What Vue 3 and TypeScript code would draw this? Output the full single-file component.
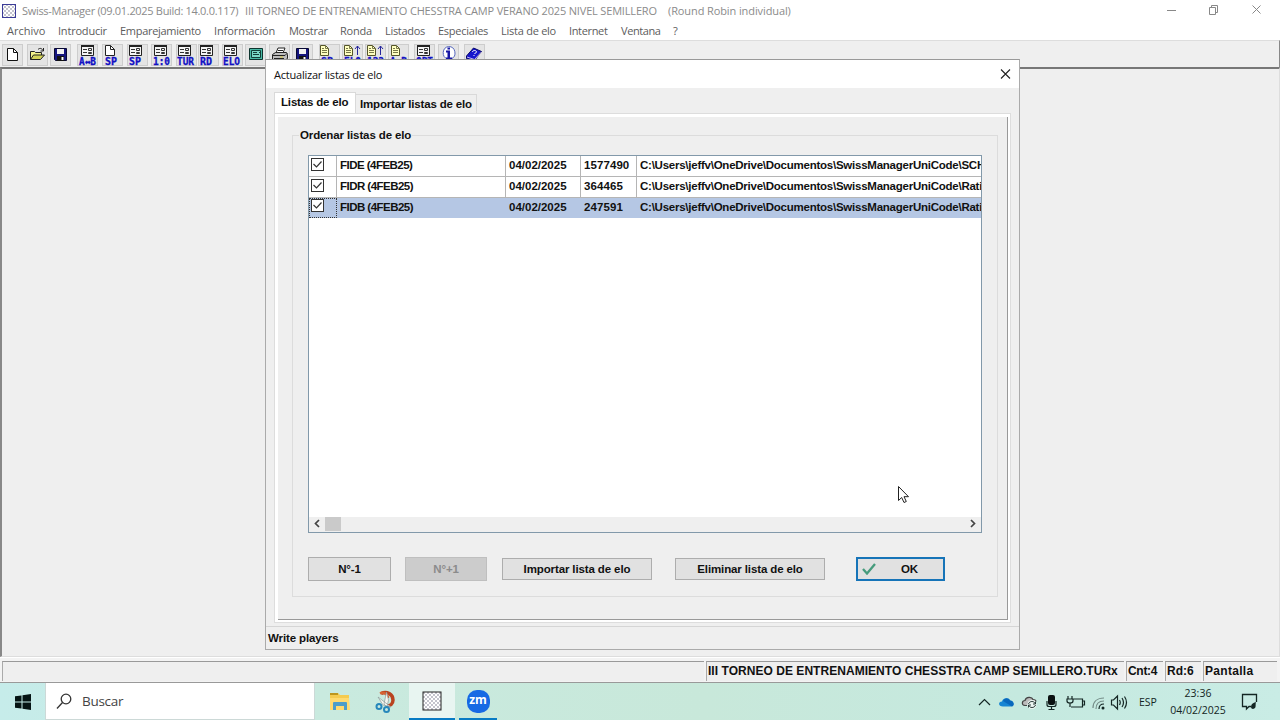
<template>
  <div class="desktop">
    <div class="titlebar">
      <svg class="app-icon" width="16" height="16" viewBox="0 0 16 16">
        <defs>
          <pattern id="checker" width="4" height="4" patternUnits="userSpaceOnUse">
            <rect width="4" height="4" fill="#fff" />
            <path d="M0 0L4 4M4 0L0 4" stroke="#9c9cab" stroke-width=".6" />
          </pattern>
        </defs>
        <rect x="1.500" y="1.500" width="13" height="13" fill="url(#checker)" stroke="#3c3c98" />
      </svg>
      <span class="app-name">Swiss-Manager (09.01.2025 Build: 14.0.0.117)</span>
      <span class="app-file">III TORNEO DE ENTRENAMIENTO CHESSTRA CAMP VERANO 2025 NIVEL SEMILLERO</span>
      <span class="app-mode">(Round Robin individual)</span>
      <svg class="window-buttons" width="100" height="20" viewBox="0 0 100 20" fill="none" stroke="#888">
        <path d="M1 9.500h9M43.500 6.500h6v7h-6zM45.500 6.500v-2h6v7h-2M86.500 4.500l8 8M94.500 4.500l-8 8" />
      </svg>
    </div>

    <nav class="menubar">
      <span
        v-for="item in menu"
        :key="item.label"
        class="menu-item"
        :style="{ width: item.width + 'px', letterSpacing: item.spacing + 'px' }"
      >{{ item.label }}</span>
    </nav>

    <div class="toolbar">
      <div
        v-for="(tool, i) in tools"
        :key="i"
        class="tool"
        :style="{ marginLeft: tool.gap + 'px' }"
      >
        <svg width="21" height="22" viewBox="0 0 21 22">
          <g v-if="tool.icon === 'new'">
            <path d="M5.500 4.500h6l4 4v8h-10z" fill="#fff" stroke="#111" />
            <path d="M11.500 4.500v4h4" fill="none" stroke="#111" />
          </g>
          <g v-else-if="tool.icon === 'open'" stroke="#222">
            <path d="M3.500 15.500v-8h4l1 1h6v3" fill="#f4f48c" />
            <path d="M3.500 15.500l3-4.500h11l-4 4.500z" fill="#d4d45a" />
            <path d="M11 5.500c2-2 4-1 5 1M16.500 4v3h-3" fill="none" />
          </g>
          <g v-else-if="tool.icon === 'save'">
            <path d="M4.500 4.500h12v12h-11l-1-1z" fill="#15157e" stroke="#090933" />
            <path d="M7 5h7v5H7z" fill="#f1f1f1" />
            <path d="M7 12h7v5H7z" fill="#111" />
            <path d="M11.500 13h2v3h-2z" fill="#fff" />
          </g>
          <g v-else-if="tool.icon === 'form'" :transform="`translate(${tool.shift ?? 0})`">
            <path d="M4.500 1.500h12v10h-12z" fill="#f4f4f4" stroke="#222" />
            <path d="M4 1h13v2H4z" fill="#222" />
            <path d="M6 5.500h4M6 8.500h4M11.500 4.500h3v2h-3zM11.500 8.500h3v1h-3z" fill="none" stroke="#333" />
          </g>
          <g v-else-if="tool.icon === 'page'" :transform="`translate(${tool.shift ?? 0})`">
            <path d="M5.500 1.500h5l4 4v6h-9z" fill="#fff" stroke="#222" />
            <path d="M10.500 1.500v4h4" fill="none" stroke="#222" />
          </g>
          <g v-else-if="tool.icon === 'list' || tool.icon === 'sort'" :transform="`translate(${tool.shift ?? 0})`">
            <path d="M2.500 1.500h5l3 3v7h-8z" fill="#ffffc0" stroke="#55552a" />
            <path d="M7.500 1.500v3h3M4 4.500h2M4 6.500h5M4 8.500h5" fill="none" stroke="#77774a" />
            <path v-if="tool.icon === 'sort'" d="M15.500 11V2M13 5l2.500-3L18 5" fill="none" stroke="#26269c" />
          </g>
          <g v-else-if="tool.icon === 'screen'">
            <path d="M4.500 4.500h13v11h-13z" fill="#48b9a5" stroke="#0d342e" />
            <path d="M6.500 6.500h9v7h-9z" fill="#79d9c7" stroke="#123e37" />
            <path d="M8 8.500h4M8 10.500h6M14 8.500h1" stroke="#123e37" />
          </g>
          <g v-else-if="tool.icon === 'print'" stroke="#222">
            <path d="M7 9l2-5h7l-2 5z" fill="#fff" />
            <path d="M3.500 10.500l3-2h11l1 2v4l-3 2h-12z" fill="#bcbcbc" />
            <path d="M4 11.500h12l2-2M5 14.500h10M9 6.500h5" fill="none" />
            <path d="M11 13h3" stroke="#d9c93c" />
          </g>
          <g v-else-if="tool.icon === 'info'">
            <path d="M10.500 2.500a6.500 6.500 0 0 1 2.500 12.500l-2.500 3-1-3A6.500 6.500 0 0 1 10.500 2.500z" fill="#fff" stroke="#5567bd" />
            <path d="M9 6.500h3v7h2V15H8v-1.500h1.500v-5H8v-2zM9.500 3.500h2.500v2H9.500z" fill="#1717a5" />
          </g>
          <g v-else>
            <path d="M2.500 12l7-8 8 3.500-7 9-8-2z" fill="#1616cd" stroke="#090967" />
            <path d="M3 13l7.500 2.500 7-7.500" fill="none" stroke="#edf" stroke-width=".8" />
            <path d="M8.500 8c0-2 4-2 4 0 0 1-2 1-2 2M9.500 11.500h1" fill="none" stroke="#fff" />
          </g>
          <text
            v-if="tool.text"
            class="tool-text"
            :x="tool.textX ?? 2"
            y="20.500"
            :textLength="tool.text.length > 2 ? 17 : 12"
            lengthAdjust="spacingAndGlyphs"
          >{{ tool.text }}</text>
        </svg>
      </div>
    </div>

    <div class="workspace"></div>

    <footer class="statusbar">
      <div class="panel panel-empty"></div>
      <div class="panel panel-file">III TORNEO DE ENTRENAMIENTO CHESSTRA CAMP SEMILLERO.TURx</div>
      <div class="panel panel-count">Cnt:4</div>
      <div class="panel panel-round">Rd:6</div>
      <div class="panel panel-screen">Pantalla</div>
    </footer>

    <div class="taskbar">
      <div class="start">
        <svg width="16" height="16" viewBox="0 0 16 16" fill="#061414">
          <path d="M0 2.300l6.500-.9v6.100H0zM7.500 1.200L16 0v7.500H7.500zM0 8.500h6.500v6.100L0 13.700zM7.500 8.500H16V16l-8.500-1.200z" />
        </svg>
      </div>
      <div class="search">
        <svg width="17" height="17" viewBox="0 0 17 17" fill="none" stroke="#333" stroke-width="1.300">
          <circle cx="10" cy="6" r="4.800" />
          <path d="M6.500 9.500L1 15.500" />
        </svg>
        <span>Buscar</span>
      </div>
      <div class="apps">
        <div class="app">
          <svg width="22" height="20" viewBox="0 0 22 20">
            <path d="M1 1h8l2 2h9v15H1z" fill="#f5cb4f" />
            <path d="M1 1h8v2H1z" fill="#bd961e" />
            <path d="M1 6h19l1 12H1z" fill="#ffda70" />
            <path d="M4 11q0-1 1-1h12q1 0 1 1v7h-3v-4H7v4H4z" fill="#4c9dc9" />
          </svg>
        </div>
        <div class="app">
          <svg width="22" height="24" viewBox="0 0 22 24" fill="none">
            <path d="M6 3.500c6-3 12 1 12 6.500 0 4-3 6-6 6" stroke="#b9431f" stroke-width="3.500" />
            <path d="M5 3.500c4-2 8 1 8 4.500" stroke="#d66231" stroke-width="2.500" />
            <path d="M11.500 2L9 14l3 3 1.500-7zM3 7l5 8 8 2z" fill="#f5f5ef" stroke="#8e9b9b" stroke-width=".7" />
            <circle cx="4" cy="16.500" r="2.500" stroke="#2687bb" stroke-width="2" />
            <circle cx="11.500" cy="19.500" r="2.500" stroke="#2687bb" stroke-width="2" />
          </svg>
        </div>
        <div class="app app-active">
          <svg width="20" height="20" viewBox="0 0 20 20">
            <rect x="1" y="1" width="18" height="18" fill="url(#checker)" stroke="#222" />
          </svg>
        </div>
        <div class="app app-running">
          <span class="zoom">zm</span>
        </div>
      </div>
      <div class="tray">
        <svg width="150" height="24" viewBox="0 0 150 24" fill="none" stroke="#142624" stroke-width="1.200">
          <path d="M1 15l5.500-5.500L12 15" />
          <path d="M25 16.500c-5 0-5-5-1-5 1-4 7-4 8-1 4 0 5 6 1 6z" fill="#1685d3" stroke="none" />
          <path d="M25 11c2-4 6-3 7-.5 4 0 5 5.500 2 6z" fill="#0868bd" stroke="none" />
          <path d="M49 15.500h-2c-4-.5-3-5 0-5 1-4 7-4 8-1 2 0 3 1 3 2" fill="#bbb" stroke="#444" />
          <circle cx="54" cy="14.500" r="4.500" fill="#edf6f3" stroke="none" />
          <path d="M50.500 14c1-3.500 6-3 6.500-.5m.5-2v2.500H55M57.500 15c-1 3.500-6 3-6.500.5m-.5 2V15H53" stroke-width=".9" />
          <rect x="70" y="5" width="7" height="10" rx="2" fill="#0a1111" stroke="none" />
          <path d="M69 11v3.500q0 2 2 2h5q2 0 2-2V11M73.500 17v3M70.500 19.500h6" />
          <path d="M94 9h10.500v8H93M105 11h1.500v4H105M90 6v3M94 6v3M89 9h6v2q0 2-3 2t-3-2zM92 13v4" />
          <g stroke="#768e89">
            <path d="M115 18C115 12 119 8 126 8M118 19c0-5 3-8 8-8" />
            <path d="M121 19c0-3 2-5 5-5" stroke="#142624" />
            <circle cx="125" cy="18" r="1.500" fill="#142624" stroke="none" />
          </g>
          <path d="M133.500 10h2l4-4v13l-4-4h-2zM141.500 10q1.500 2.500 0 5M144 8q3 4.500 0 9M146.500 6.500q4 6 0 12" />
        </svg>
        <span class="language">ESP</span>
        <div class="clock">
          <span>23:36</span>
          <span>04/02/2025</span>
        </div>
        <svg class="notice" width="18" height="18" viewBox="0 0 18 18" fill="none" stroke="#142624" stroke-width="1.300">
          <path d="M10 13.500H8L5.500 16v-2.500H1.500v-12h14V9" />
          <path d="M10 14c0-3 2-4 5-5-1 3 1 6-3 7-1 0-2-1-2-2z" fill="#142624" stroke="none" />
        </svg>
      </div>
    </div>

    <section class="dialog">
      <header class="dialog-title">
        <span>Actualizar listas de elo</span>
        <svg width="11" height="11" viewBox="0 0 11 11" fill="none" stroke="#222" stroke-width="1.100">
          <path d="M1 .500l9 9M10 .500l-9 9" />
        </svg>
      </header>

      <div class="dialog-body">
        <div class="tabs">
          <div class="tab tab-active">Listas de elo</div>
          <div class="tab">Importar listas de elo</div>
        </div>
        <div class="tab-page">
          <div class="tab-inner">
            <fieldset class="group">
              <legend>Ordenar listas de elo</legend>
              <div class="grid">
                <div
                  v-for="row in rows"
                  :key="row.name"
                  class="row"
                  :class="{ selected: row.selected }"
                >
                  <div class="cell cell-check">
                    <svg width="13" height="13" viewBox="0 0 13 13" fill="none" stroke="#333">
                      <rect x=".5" y=".5" width="12" height="12" fill="#fff" />
                      <path d="M2.500 6l3 3 5-5.500" stroke-width="1.200" />
                    </svg>
                  </div>
                  <div class="cell cell-name">{{ row.name }}</div>
                  <div class="cell cell-date">04/02/2025</div>
                  <div class="cell cell-count">{{ row.count }}</div>
                  <div class="cell cell-path">{{ row.path }}</div>
                </div>
                <div class="grid-space"></div>
                <div class="scrollbar">
                  <svg width="16" height="13" viewBox="0 0 16 13" fill="none" stroke="#444" stroke-width="1.700">
                    <path d="M10 3L6.500 6.500 10 10" />
                  </svg>
                  <div class="thumb"></div>
                  <svg class="scroll-right" width="16" height="13" viewBox="0 0 16 13" fill="none" stroke="#444" stroke-width="1.700">
                    <path d="M6 3l3.500 3.500L6 10" />
                  </svg>
                </div>
              </div>
              <div class="buttons">
                <button class="btn btn-up">N°-1</button>
                <button class="btn btn-down" disabled>N°+1</button>
                <button class="btn btn-import">Importar lista de elo</button>
                <button class="btn btn-delete">Eliminar lista de elo</button>
                <button class="btn btn-ok">
                  <svg width="14" height="12" viewBox="0 0 14 12" fill="none" stroke="#469b7c" stroke-width="2.300">
                    <path d="M1 6l4 4.500L13 1" />
                  </svg>
                  <span>OK</span>
                </button>
              </div>
            </fieldset>
          </div>
        </div>
      </div>
      <div class="dialog-status">Write players</div>
    </section>

    <svg class="cursor" width="13" height="20" viewBox="0 0 13 20">
      <path d="M2.500 1.500v14l3.200-3 2.300 5 2.300-1-2.300-4.800h4.500z" fill="#fff" stroke="#222" />
    </svg>
  </div>
</template>

<script setup lang="ts">
interface MenuItem {
  label: string
  width: number
  spacing: number
}

interface Tool {
  icon: string
  gap: number
  text?: string
  textX?: number
  shift?: number
}

interface RatingList {
  name: string
  count: number
  path: string
  selected?: boolean
}

const menu: MenuItem[] = [
  { label: 'Archivo', width: 51, spacing: 0 },
  { label: 'Introducir', width: 62, spacing: -0.2 },
  { label: 'Emparejamiento', width: 94, spacing: -0.3 },
  { label: 'Información', width: 75, spacing: -0.1 },
  { label: 'Mostrar', width: 51, spacing: -0.3 },
  { label: 'Ronda', width: 45, spacing: -0.2 },
  { label: 'Listados', width: 53, spacing: -0.3 },
  { label: 'Especiales', width: 63, spacing: -0.25 },
  { label: 'Lista de elo', width: 68, spacing: -0.25 },
  { label: 'Internet', width: 52, spacing: -0.35 },
  { label: 'Ventana', width: 52, spacing: -0.4 },
  { label: '?', width: 20, spacing: 0 }
]

const tools: Tool[] = [
  { icon: 'new', gap: 2 },
  { icon: 'open', gap: 4 },
  { icon: 'save', gap: 2 },
  { icon: 'form', gap: 6, text: 'A↔B' },
  { icon: 'page', gap: 4, text: 'SP', textX: 3, shift: -2 },
  { icon: 'form', gap: 4, text: 'SP', shift: -2 },
  { icon: 'form', gap: 3, text: '1:0', shift: -1 },
  { icon: 'form', gap: 4, text: 'TUR', textX: 1, shift: -2 },
  { icon: 'form', gap: 1, text: 'RD', shift: -2 },
  { icon: 'form', gap: 3, text: 'ELO', textX: 1, shift: -2 },
  { icon: 'screen', gap: 2 },
  { icon: 'print', gap: 3 },
  { icon: 'save', gap: 2 },
  { icon: 'list', gap: 6, text: 'SP', shift: -1 },
  { icon: 'sort', gap: 2, text: 'ELO' },
  { icon: 'sort', gap: 2, text: '123' },
  { icon: 'list', gap: 2, text: 'A↔B', shift: 1 },
  { icon: 'form', gap: 5, text: 'OPT', shift: -1 },
  { icon: 'info', gap: 3 },
  { icon: 'book', gap: 5 }
]

const folder = 'C:\\Users\\jeffv\\OneDrive\\Documentos\\SwissManagerUniCode\\'

const rows: RatingList[] = [
  { name: 'FIDE (4FEB25)', count: 1577490, path: folder + 'SCH' },
  { name: 'FIDR (4FEB25)', count: 364465, path: folder + 'Rati' },
  { name: 'FIDB (4FEB25)', count: 247591, path: folder + 'Rati', selected: true }
]
</script>

<style>
body {
  overflow: hidden;
}
</style>

<style scoped>
* {
  box-sizing: border-box;
}

.desktop {
  position: relative;
  display: flex;
  flex-direction: column;
  width: 1280px;
  height: 720px;
  background: #efefef;
  font-family: "Open Sans", "Noto Sans", sans-serif;
  font-size: 11px;
  white-space: nowrap;
}

.titlebar {
  display: flex;
  align-items: center;
  height: 21px;
  padding-left: 1px;
  background: #fff;
  color: #8b8b8b;
}

.app-icon {
  margin-right: 5px;
}

.app-name {
  width: 223px;
  letter-spacing: -0.31px;
}

.app-file {
  width: 423px;
  letter-spacing: -0.17px;
}

.app-mode {
  letter-spacing: -0.1px;
}

.window-buttons {
  margin-left: auto;
  margin-right: 14px;
}

.menubar {
  display: flex;
  align-items: center;
  height: 19px;
  padding-left: 7px;
  background: #fff;
  color: #5c5c5c;
}

.menu-item {
  flex: none;
}

.toolbar {
  display: flex;
  height: 27px;
  padding-top: 3px;
  border-top: 1px solid #ddd;
  border-right: 1px solid #888;
}

.tool {
  flex: none;
  width: 21px;
  height: 22px;
  background: #e4e4e4;
  box-shadow: inset 0 0 0 1px #cdcdcd;
}

.tool svg {
  display: block;
}

.tool-text {
  font: bold 10px "DejaVu Sans Mono", monospace;
  fill: #1111c4;
  stroke: #1111c4;
  stroke-width: 0.3px;
}

.workspace {
  flex: 1;
  border-top: 2px solid #777;
  border-left: 2px solid #888;
  border-right: 1px solid #ddd;
  border-bottom: 1px solid #ddd;
}

.statusbar {
  display: flex;
  height: 26px;
  padding: 3px 3px 2px 2px;
  gap: 2px;
  border-top: 1px solid #fff;
  border-bottom: 1px solid #999;
  background: #f3f3f3;
  color: #111;
  font: bold 12px "Liberation Sans", Arial, sans-serif;
}

.panel {
  height: 20px;
  padding-left: 1px;
  border-top: 1px solid #999;
  border-left: 1px solid #aaa;
  background: #efefef;
  line-height: 19px;
}

.panel-empty {
  width: 702px;
}

.panel-file {
  width: 418px;
  letter-spacing: 0.04px;
}

.panel-count {
  width: 37px;
  letter-spacing: -0.3px;
}

.panel-round {
  width: 36px;
}

.panel-screen {
  flex: 1;
  letter-spacing: 0.3px;
}

.taskbar {
  display: flex;
  align-items: center;
  height: 37px;
  background: linear-gradient(90deg, #c6ecea 0, #c9eadf 25%, #c8e8da 55%, #c5e9df 80%, #c9ece5 100%);
  color: #142624;
}

.start {
  display: flex;
  justify-content: center;
  width: 45px;
}

.search {
  display: flex;
  align-items: center;
  gap: 9px;
  width: 270px;
  height: 37px;
  padding-left: 10px;
  border: 1px solid #ccd9d7;
  border-top: 0;
  background: #fff;
  color: #444;
  font-size: 13.5px;
  letter-spacing: -0.3px;
}

.apps {
  display: flex;
  align-self: stretch;
  padding-left: 2px;
}

.app {
  display: flex;
  align-items: center;
  justify-content: center;
  width: 46px;
}

.app-active {
  background: #e8f5f1;
  border-bottom: 2px solid #087bc4;
}

.app-running {
  width: 38px;
  margin-left: 4px;
  border-bottom: 2px solid #087bc4;
}

.zoom {
  width: 23px;
  height: 23px;
  margin-top: 2px;
  border-radius: 10px;
  background: #1769e4;
  color: #fff;
  font: bold 12px/20px "Open Sans", sans-serif;
  text-align: center;
}

.tray {
  display: flex;
  align-items: center;
  margin-left: auto;
  padding-right: 21px;
}

.language {
  width: 31px;
  margin-left: 11px;
  font-size: 10.5px;
}

.clock {
  display: flex;
  flex-direction: column;
  align-items: center;
  width: 56px;
  font-size: 10.5px;
  line-height: 17px;
}

.notice {
  margin-left: 15px;
}

.dialog {
  position: absolute;
  left: 265px;
  top: 59px;
  display: flex;
  flex-direction: column;
  width: 755px;
  height: 591px;
  border: 1px solid #aaa;
  border-top-color: #999;
  background: #efefef;
  color: #111;
  font: bold 11.5px "Liberation Sans", Arial, sans-serif;
  letter-spacing: -0.12px;
}

.dialog-title {
  display: flex;
  flex: none;
  align-items: center;
  justify-content: space-between;
  height: 28px;
  padding: 0 8px;
  background: #fff;
  font: 11px "Open Sans", "Noto Sans", sans-serif;
  letter-spacing: -0.22px;
}

.dialog-body {
  display: flex;
  flex: none;
  flex-direction: column;
  height: 538px;
  padding: 4px 8px 3px 8px;
}

.tabs {
  display: flex;
  flex: none;
  align-items: flex-end;
  height: 21px;
}

.tab {
  width: 121px;
  height: 19px;
  padding-left: 4px;
  border: 1px solid #d9d9d9;
  border-left: 0;
  border-bottom: 0;
  line-height: 18px;
  letter-spacing: -0.17px;
}

.tab-active {
  width: 82px;
  height: 21px;
  padding-left: 6px;
  border-left: 1px solid #d9d9d9;
  background: #fff;
}

.tab-page {
  flex: 1;
  padding: 3px 2px 2px 3px;
  border: 1px solid #ddd;
  background: #fff;
}

.tab-inner {
  height: 100%;
  padding: 11px 9px 0 14px;
  border-right: 1px solid #999;
  border-bottom: 1px solid #999;
  background: #efefef;
}

.group {
  min-width: 0;
  height: 469px;
  margin: 0;
  padding: 12px 15px 0;
  border: 1px solid #dcdcdc;
}

.group legend {
  margin-left: -9px;
  padding: 0 1px;
  line-height: 15px;
}

.grid {
  display: flex;
  flex-direction: column;
  width: 674px;
  height: 378px;
  border: 1px solid #8299aa;
  background: #fff;
  overflow: hidden;
}

.row {
  display: flex;
  flex: none;
  height: 21px;
  border-bottom: 1px solid #b5b5b5;
}

.cell {
  flex: none;
  padding-left: 3px;
  border-right: 1px solid #b5b5b5;
  line-height: 19px;
}

.cell-check {
  width: 28px;
  padding: 2px 0 0 2px;
}

.cell-check svg {
  display: block;
}

.cell-name {
  width: 169px;
  letter-spacing: -0.53px;
}

.cell-date {
  width: 75px;
  letter-spacing: 0;
}

.cell-count {
  width: 56px;
  letter-spacing: 0.08px;
}

.cell-path {
  width: 345px;
  overflow: hidden;
  border-right: 0;
  letter-spacing: -0.245px;
}

.selected {
  height: 20px;
}

.selected,
.selected .cell {
  border-color: #b5c7e4;
  background: #b5c7e4;
}

.selected .cell-check {
  height: 20px;
  border: 1px dotted #333;
  padding: 0 0 0 1px;
}

.grid-space {
  flex: 1;
}

.scrollbar {
  display: flex;
  height: 15px;
  background: #efefef;
}

.thumb {
  width: 16px;
  height: 14px;
  background: #cacaca;
}

.scroll-right {
  margin-left: auto;
}

.buttons {
  display: flex;
  align-items: center;
  height: 24px;
  margin-top: 24px;
}

.btn {
  flex: none;
  height: 22px;
  padding: 0;
  border: 1px solid #adadad;
  background: #e1e1e1;
  color: #111;
  font: inherit;
  letter-spacing: inherit;
}

.btn-up {
  width: 83px;
  height: 24px;
}

.btn-down {
  width: 82px;
  height: 24px;
  margin-left: 14px;
  border-color: #bfbfbf;
  background: #ccc;
  color: #8b8b8b;
}

.btn-import {
  width: 150px;
  margin-left: 15px;
}

.btn-delete {
  width: 150px;
  margin-left: 23px;
}

.btn-ok {
  display: flex;
  align-items: center;
  gap: 25px;
  width: 89px;
  height: 24px;
  margin-left: 31px;
  padding-left: 4px;
  border: 2px solid #1674b8;
}

.dialog-status {
  flex: 1;
  padding-left: 2px;
  border-top: 1px solid #d5d5d5;
  line-height: 22px;
}

.cursor {
  position: absolute;
  left: 896px;
  top: 485px;
}
</style>
